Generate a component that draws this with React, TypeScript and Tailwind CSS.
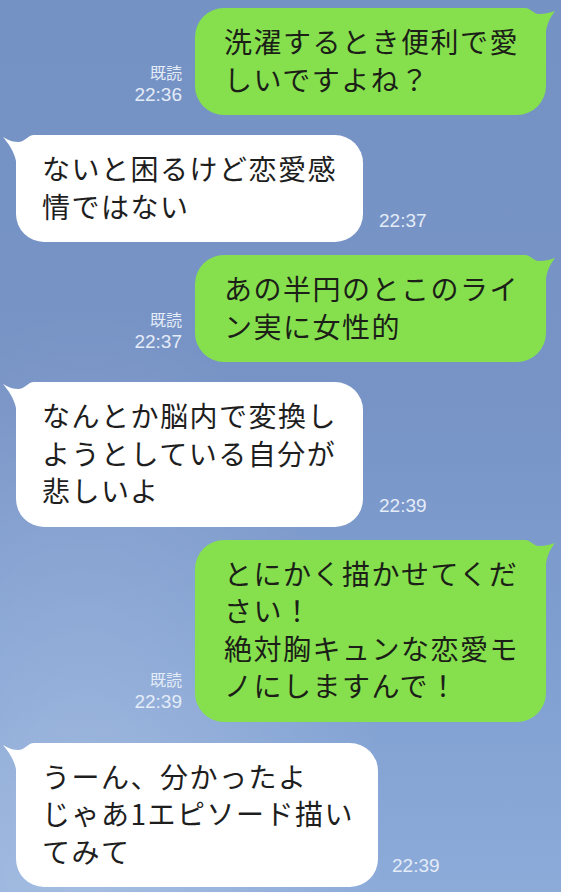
import React from "react";

function GreenTail() {
  return (
    <svg
      className="absolute top-0 right-[-9px]"
      width="40"
      height="40"
      viewBox="0 0 40 40"
    >
      <path
        d="M0,0 H10 C16,0 18,6 24,6 C31,6 36,4 40,3 C36,8 32,15 31,24 L31,40 L0,40 Z"
        fill="#86e04e"
      />
    </svg>
  );
}

function WhiteTail() {
  return (
    <svg
      className="absolute top-0 left-[-13px]"
      width="40"
      height="40"
      viewBox="0 0 40 40"
    >
      <path
        d="M40,0 H31 C25,0 22,7 15,7 C8,7 4,4 0,2 C5,8 11,16 13,26 L13,40 L40,40 Z"
        fill="#ffffff"
      />
    </svg>
  );
}

const bodyFont = "[font-family:'Noto_Sans_CJK_JP','Noto_Sans_CJK_SC',sans-serif]";

function Sent({ lines, time, mt }: { lines: string[]; time: string; mt: string }) {
  return (
    <div className={`flex justify-end items-end pr-[15px] ${mt}`}>
      <div className="flex flex-col items-end mr-[13px] mb-[9px]">
        <span className={`${bodyFont} text-[16px] leading-[18px] text-[#e4ecf8]`}>既読</span>
        <span className="[font-family:'Liberation_Sans',Arial,sans-serif] text-[19px] leading-[22px] mt-[3px] text-[#e4ecf8]">
          {time}
        </span>
      </div>
      <div className="relative w-[351px] bg-[#86e04e] rounded-[29px] pl-[29px] pt-[15px] pb-[17px]">
        <GreenTail />
        <div
          className={`${bodyFont} relative text-[28px] leading-[37.5px] tracking-[1.5px] text-[#1b1f17] whitespace-nowrap`}
        >
          {lines.map((l, i) => (
            <div key={i}>{l}</div>
          ))}
        </div>
      </div>
    </div>
  );
}

function Received({
  lines,
  time,
  mt,
  width,
  gap,
}: {
  lines: string[];
  time: string;
  mt: string;
  width: string;
  gap: string;
}) {
  return (
    <div className={`flex items-end pl-[16px] ${mt}`}>
      <div className={`relative ${width} bg-white rounded-[28px] pl-[26px] pt-[15px] pb-[17px]`}>
        <WhiteTail />
        <div
          className={`${bodyFont} relative text-[28px] leading-[37.5px] tracking-[1.5px] text-[#1e1e1e] whitespace-nowrap`}
        >
          {lines.map((l, i) => (
            <div key={i}>{l}</div>
          ))}
        </div>
      </div>
      <span
        className={`${gap} mb-[10px] [font-family:'Liberation_Sans',Arial,sans-serif] text-[19px] leading-[22px] text-[#e4ecf8]`}
      >
        {time}
      </span>
    </div>
  );
}

export default function App() {
  return (
    <div className="relative w-full h-[892px] overflow-hidden bg-[linear-gradient(180deg,#7592c4_0%,#7894c6_45%,#80a0d2_75%,#8cabd9_100%)]">
      <div className="pointer-events-none absolute inset-0 bg-[radial-gradient(ellipse_at_15%_95%,rgba(255,255,255,0.22),rgba(255,255,255,0)_45%)]" />
      <div className="relative flex flex-col pt-[8px]">
        <Sent lines={["洗濯するとき便利で愛", "しいですよね？"]} time="22:36" mt="mt-0" />
        <Received
          lines={["ないと困るけど恋愛感", "情ではない"]}
          time="22:37"
          mt="mt-[20px]"
          width="w-[347px]"
          gap="ml-[16px]"
        />
        <Sent lines={["あの半円のとこのライ", "ン実に女性的"]} time="22:37" mt="mt-[13px]" />
        <Received
          lines={["なんとか脳内で変換し", "ようとしている自分が", "悲しいよ"]}
          time="22:39"
          mt="mt-[20px]"
          width="w-[347px]"
          gap="ml-[16px]"
        />
        <Sent
          lines={["とにかく描かせてくだ", "さい！", "絶対胸キュンな恋愛モ", "ノにしますんで！"]}
          time="22:39"
          mt="mt-[13px]"
        />
        <Received
          lines={["うーん、分かったよ", "じゃあ1エピソード描い", "てみて"]}
          time="22:39"
          mt="mt-[21px]"
          width="w-[362px]"
          gap="ml-[14px]"
        />
      </div>
    </div>
  );
}
